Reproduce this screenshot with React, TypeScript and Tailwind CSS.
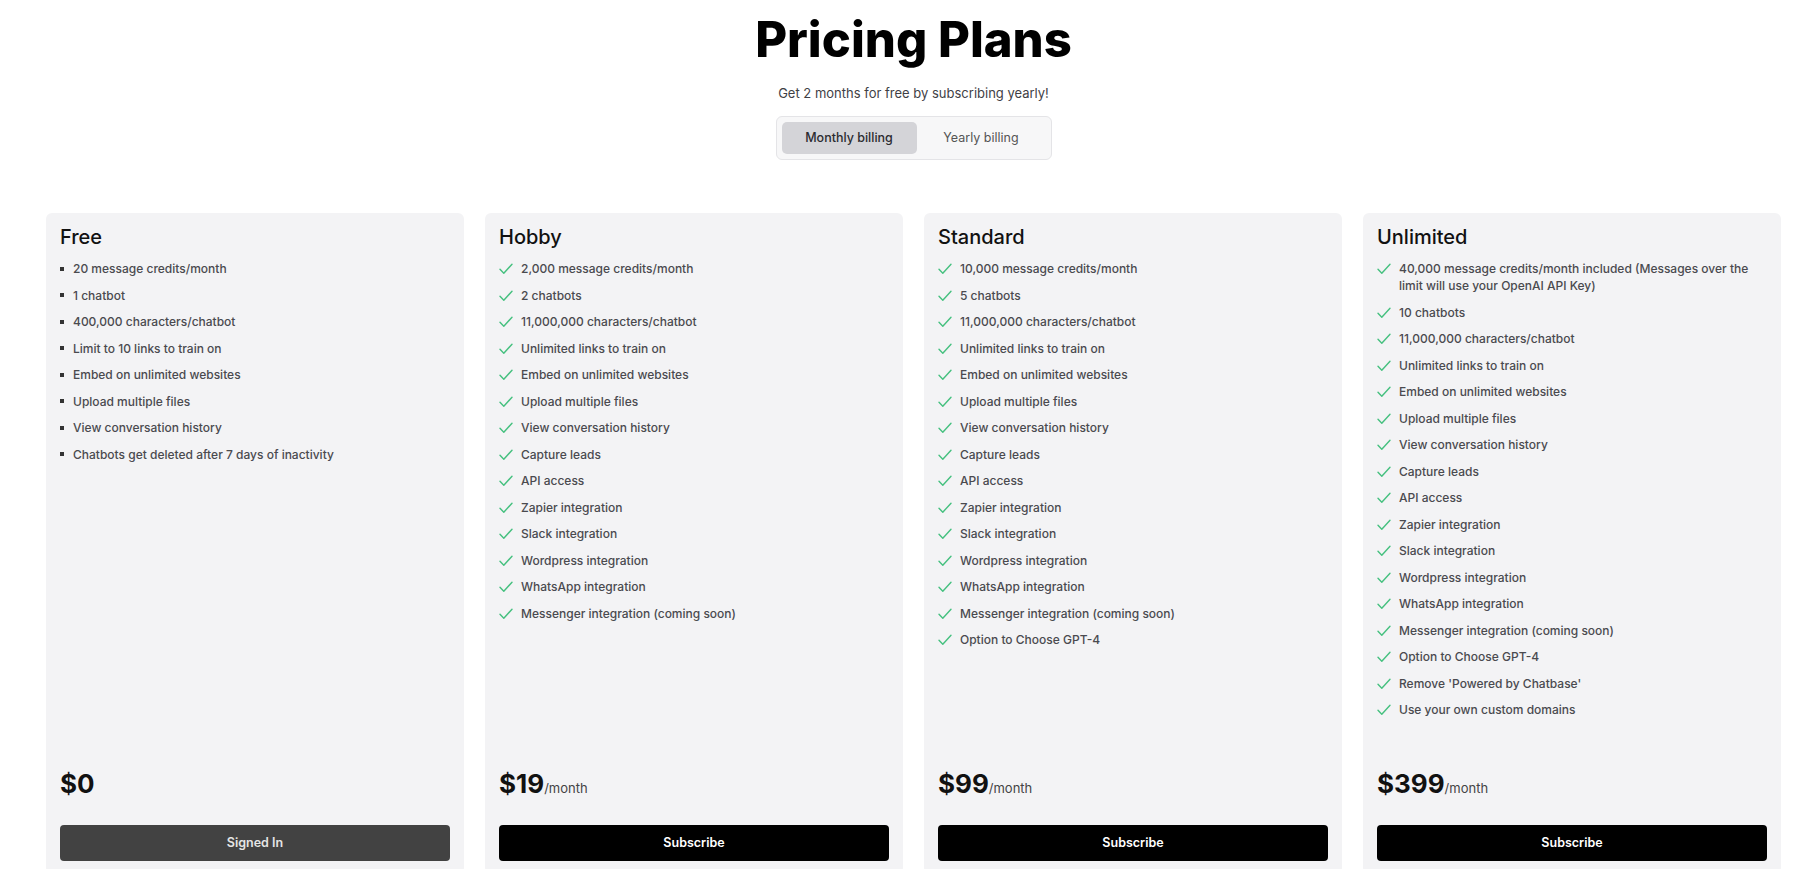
import React, { useState } from "react";

type Plan = {
  name: string;
  price: string;
  period?: string;
  features: string[];
  bullet: "square" | "check";
  action: string;
  signedIn?: boolean;
};

const common = [
  "Unlimited links to train on",
  "Embed on unlimited websites",
  "Upload multiple files",
  "View conversation history",
  "Capture leads",
  "API access",
  "Zapier integration",
  "Slack integration",
  "Wordpress integration",
  "WhatsApp integration",
  "Messenger integration (coming soon)",
];

const plans: Plan[] = [
  {
    name: "Free",
    price: "$0",
    bullet: "square",
    action: "Signed In",
    signedIn: true,
    features: [
      "20 message credits/month",
      "1 chatbot",
      "400,000 characters/chatbot",
      "Limit to 10 links to train on",
      "Embed on unlimited websites",
      "Upload multiple files",
      "View conversation history",
      "Chatbots get deleted after 7 days of inactivity",
    ],
  },
  {
    name: "Hobby",
    price: "$19",
    period: "/month",
    bullet: "check",
    action: "Subscribe",
    features: ["2,000 message credits/month", "2 chatbots", "11,000,000 characters/chatbot", ...common],
  },
  {
    name: "Standard",
    price: "$99",
    period: "/month",
    bullet: "check",
    action: "Subscribe",
    features: [
      "10,000 message credits/month",
      "5 chatbots",
      "11,000,000 characters/chatbot",
      ...common,
      "Option to Choose GPT-4",
    ],
  },
  {
    name: "Unlimited",
    price: "$399",
    period: "/month",
    bullet: "check",
    action: "Subscribe",
    features: [
      "40,000 message credits/month included (Messages over the limit will use your OpenAI API Key)",
      "10 chatbots",
      "11,000,000 characters/chatbot",
      ...common,
      "Option to Choose GPT-4",
      "Remove 'Powered by Chatbase'",
      "Use your own custom domains",
    ],
  },
];

// Thin green tick used in the paid plans' feature lists
function CheckIcon() {
  return (
    <svg
      width="14"
      height="12"
      viewBox="0 0 14 12"
      fill="none"
      stroke="#45c07f"
      strokeWidth="1.4"
      strokeLinecap="round"
      strokeLinejoin="round"
      className="mt-[3px] shrink-0"
    >
      <path d="M1 6.2 4.8 10.2 13 1.2" />
    </svg>
  );
}

function PlanCard({ plan }: { plan: Plan }) {
  return (
    <div className="flex flex-col rounded-[6px] bg-[#f3f3f5] px-[14px] pt-[10px] pb-[13px]">
      <h2 className="text-[20px] leading-[28px] font-medium text-[#111]">{plan.name}</h2>
      <ul className="mt-[9px] flex flex-col gap-[9.5px] text-[12px] leading-[17px] font-medium text-[#4a4a4f]">
        {plan.features.map((f) => (
          <li key={f} className="flex items-start">
            {plan.bullet === "check" ? (
              <>
                <CheckIcon />
                <span className="ml-[8px]">{f}</span>
              </>
            ) : (
              <>
                <span className="mt-[6.5px] h-[4px] w-[4px] shrink-0 bg-[#333]" />
                <span className="ml-[9px]">{f}</span>
              </>
            )}
          </li>
        ))}
      </ul>
      <div className="mt-auto pt-[50px]">
        <p className="h-[32px] leading-[32px]">
          <span className="text-[26px] font-bold text-[#111]">{plan.price}</span>
          {plan.period && <span className="text-[13px] text-[#444]">{plan.period}</span>}
        </p>
        <button
          className={
            "mt-[25px] h-[36px] w-full rounded-[4px] text-[12.5px] font-semibold " +
            (plan.signedIn ? "bg-[#424242] text-[#e5e5e5]" : "bg-black text-white")
          }
        >
          {plan.action}
        </button>
      </div>
    </div>
  );
}

export default function App() {
  const [yearly, setYearly] = useState(false);
  return (
    <div className="min-h-screen bg-white pl-[46px] pr-[19px] font-['Inter',_'Noto_Sans',sans-serif]">
      <div className="flex flex-col items-center pt-[12px]">
        <h1 className="text-[49px] leading-[56px] font-extrabold text-black">Pricing Plans</h1>
        <p className="mt-[16px] text-[13px] leading-[18px] text-[#3f3f46]">
          Get 2 months for free by subscribing yearly!
        </p>
        <div className="mt-[14px] flex rounded-[6px] border border-[#e4e4e7] bg-[#f7f7f8] p-[5px]">
          <button
            onClick={() => setYearly(false)}
            className={
              "h-[32px] w-[135px] rounded-[5px] text-[12.5px] font-medium " +
              (!yearly ? "bg-[#d4d4d8] text-[#2b2b30]" : "text-[#555]")
            }
          >
            Monthly billing
          </button>
          <button
            onClick={() => setYearly(true)}
            className={
              "h-[32px] w-[129px] rounded-[5px] text-[12.5px] " +
              (yearly ? "bg-[#d4d4d8] font-medium text-[#2b2b30]" : "text-[#555]")
            }
          >
            Yearly billing
          </button>
        </div>
      </div>
      <div className="mt-[53px] grid grid-cols-4 gap-[21px]">
        {plans.map((p) => (
          <PlanCard key={p.name} plan={p} />
        ))}
      </div>
    </div>
  );
}
